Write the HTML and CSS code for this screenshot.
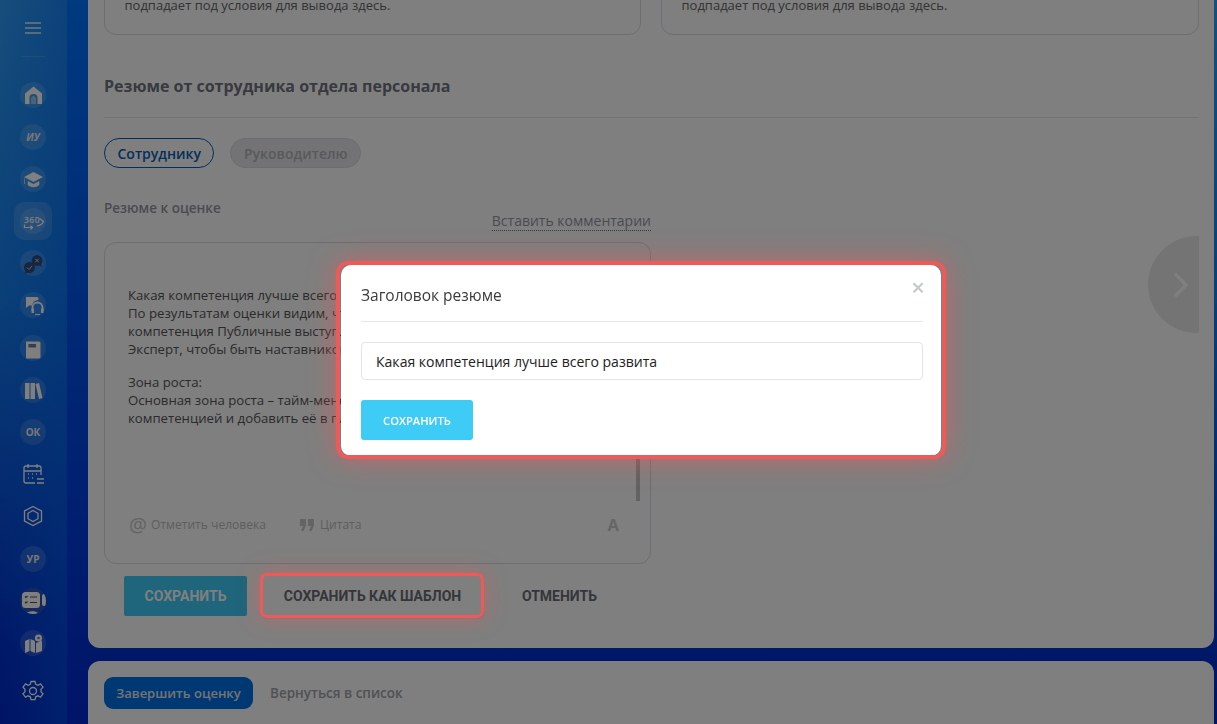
FILE: index.html
```html
<!DOCTYPE html>
<html lang="en">

<head>
    <meta charset="UTF-8">
    <meta name="viewport" content="width=device-width, initial-scale=1.0">
    <title>Резюме</title>
    <link rel="stylesheet" href="styles.css">
</head>

<body>
    <nav class="sidebar">
        <div class="burger"><span></span><span></span><span></span></div>
        <div class="side-line"></div>
        <div class="nav-list">
            <div class="nav-item"><svg viewBox="0 0 26 26"><path d="M13.500 4.500 5 11.500V22h4.500v-6a4 4 0 0 1 8 0v6H22V11.500z" fill="#fff"/><path d="M11 22v-5.500a2.500 2.500 0 0 1 5 0V22z" fill="#fff" opacity=".45"/></svg></div>
            <div class="nav-item"><span class="nav-text nav-italic">ИУ</span></div>
            <div class="nav-item"><svg viewBox="0 0 26 26"><path d="M13.500 6 4 11l9.500 5 9.500-5z" fill="#fff"/><path d="M8 15.500v3.500c3 2.500 8 2.500 11 0v-3.500L13.500 18.300zM4.500 12.500v5.500" fill="#fff" stroke="#fff" stroke-width=".6"/></svg></div>
            <div class="nav-item active"><svg viewBox="0 0 26 26"><text x="4" y="14.500" class="nav-svg-text">360</text><path d="M4.500 16.500v3h8M10.500 17.500l2 2-2 2M17 18c3-.5 5.500-2 6.500-4.500L19.500 10.500" fill="none" stroke="#fff" stroke-width="1.200"/></svg></div>
            <div class="nav-item"><svg viewBox="0 0 26 26"><circle cx="17" cy="10.500" r="5.400" fill="#2f4a7c"/><path d="M19 15l2.500 2-.5-3.500z" fill="#2f4a7c"/><circle cx="9.500" cy="17.500" r="5.500" fill="#2f4a7c"/><path d="M6 21l-2 2.500 3.500-.5z" fill="#2f4a7c"/><path d="M15.300 8.800l3.400 3.400M18.700 8.800l-3.400 3.400M7 17.500l2 2 3-3.500" fill="none" stroke="#c8d0dc" stroke-width="1"/></svg></div>
            <div class="nav-item"><svg viewBox="0 0 26 26"><path d="M6 5h11a1.500 1.500 0 0 1 1.500 1.500V8a7 7 0 0 0-6.500 5.500H9L6 16z" fill="#fff"/><path d="M12.500 19v-3.500a5 5 0 0 1 10 0V19" fill="none" stroke="#fff" stroke-width="1.800"/><path d="M11.500 16.500H14V21h-2.500zM21 16.500h2.500V21H21zM15 22h5v1h-5z" fill="#fff"/></svg></div>
            <div class="nav-item"><svg viewBox="0 0 26 26"><path d="M6 6.500h13a1.500 1.500 0 0 1 1.500 1.500v14a1.500 1.500 0 0 1-1.500 1.500H6z" fill="#fff"/><path d="M8.500 9h7.500v3.500H8.500z" fill="#687c9c"/></svg></div>
            <div class="nav-item"><svg viewBox="0 0 26 26"><path d="M5 6h4.500v16H5zM10.500 6H15v16h-4.500zM15.500 7l3.500-1 3.500 15-3.500 1z" fill="#fff"/></svg></div>
            <div class="nav-item"><span class="nav-text">ОК</span></div>
            <div class="nav-item plain"><svg viewBox="0 0 26 26" fill="none" stroke="#fff" stroke-width="1.300"><path d="M15 22H6a2 2 0 0 1-2-2V7a2 2 0 0 1 2-2h13a2 2 0 0 1 2 2v7M8 3v4M17 3v4M4 10h17"/><path d="M8 13h1M12 13h1M16 13h1M8 17h1M12 17h1M17 18h7M17 22h7" stroke-width="1.500"/></svg></div>
            <div class="nav-item plain"><svg viewBox="0 0 26 26" fill="none" stroke="#fff" stroke-width="1.300"><path d="M13 3.500 21.500 8v10L13 22.500 4.500 18V8z"/><path d="M13 7.500 18 10.300v5.400l-5 2.800-5-2.800v-5.400z"/></svg></div>
            <div class="nav-item"><span class="nav-text">УР</span></div>
            <div class="nav-item dark"><svg viewBox="0 0 26 26"><circle cx="13" cy="13" r="13" fill="#2850b8"/><rect x="2" y="4" width="18" height="16" rx="3.500" fill="#fff"/><path d="M5 8.500l1 1 1.500-1.500M10 9h7M5 14l1 1 1.500-1.500M10 14.500h7" fill="none" stroke="#555" stroke-width="1.200"/><rect x="22" y="6" width="6" height="12" rx="2" fill="#fff"/><path d="M5 26c2-3 10-4 13-1l-1 2H6z" fill="#fff"/></svg></div>
            <div class="nav-item"><svg viewBox="0 0 26 26"><path d="M5 11l4.500-2v12L5 23zM10.500 9l4.500 2v12l-4.500-2zM16 13l6-2.500V21l-6 2z" fill="#fff"/><circle cx="18.500" cy="8" r="3.600" fill="#fff"/><circle cx="18.500" cy="8" r="1.300" fill="#687c9c"/></svg></div>
            <div class="nav-item plain gear"><svg viewBox="0 0 26 26" fill="none" stroke="#fff" stroke-width="1.300"><circle cx="13" cy="13" r="3.500"/><path d="M11 3.500h4l.7 2.800 2.300 1 2.500-1.400 2.500 3.300-2 2.100v2.500l2 2.100-2.500 3.300-2.500-1.400-2.300 1-.7 2.800h-4l-.7-2.800-2.300-1-2.500 1.400L3 15.900l2-2.100v-2.500L3 9.200l2.500-3.300L8 7.300l2.300-1z"/></svg></div>
        </div>
    </nav>

    <main class="main">
        <section class="panel">
            <div class="cards">
                <div class="card">подпадает под условия для вывода здесь.</div>
                <div class="card">подпадает под условия для вывода здесь.</div>
            </div>
            <h2 class="section-title">Резюме от сотрудника отдела персонала</h2>
            <div class="pills">
                <button class="pill pill-active">Сотруднику</button>
                <button class="pill">Руководителю</button>
            </div>
            <div class="field">
                <div class="field-label">Резюме к оценке</div>
                <a class="insert-link">Вставить комментарии</a>
                <div class="editor">
                    <div class="editor-text">
                        <p>Какая компетенция лучше всего развита:<br>По результатам оценки видим, что лучше всего развита<br>компетенция Публичные выступления. Можно дать уровень<br>Эксперт, чтобы быть наставником для коллег.</p>
                        <p>Зона роста:<br>Основная зона роста – тайм-менеджмент. Стоит поработать над этой<br>компетенцией и добавить её в план развития.</p>
                    </div>
                    <div class="editor-scroll"></div>
                    <div class="editor-tools">
                        <span class="tool"><span class="tool-at">@</span>Отметить человека</span>
                        <span class="tool tool-quote"><svg class="quote-icon" viewBox="0 0 15 12"><path d="M0 0h6v6.500L3.500 12H1l2-5H0zM8 0h6v6.500L11.500 12H9l2-5H8z"/></svg>Цитата</span>
                        <span class="tool-font">A</span>
                    </div>
                </div>
            </div>
            <div class="form-buttons">
                <button class="btn btn-save">СОХРАНИТЬ</button>
                <button class="btn btn-template">СОХРАНИТЬ КАК ШАБЛОН<span class="highlight"></span></button>
                <button class="btn btn-cancel">ОТМЕНИТЬ</button>
            </div>
        </section>
        <div class="next-arrow"><svg viewBox="0 0 16 28" fill="none"><path d="M2 2l12 12L2 26" stroke="#fff" stroke-width="3.500"/></svg></div>
        <footer class="bottom-bar">
            <button class="finish-btn">Завершить оценку</button>
            <a class="back-link">Вернуться в список</a>
        </footer>
    </main>

    <div class="overlay"></div>

    <div class="modal">
        <span class="modal-ring"></span>
        <div class="modal-head">Заголовок резюме<span class="modal-close">×</span></div>
        <input class="modal-input" type="text" value="Какая компетенция лучше всего развита">
        <button class="modal-save">СОХРАНИТЬ</button>
    </div>
</body>

</html>
```

FILE: styles.css
```css
* {
    box-sizing: border-box;
}

body {
    margin: 0;
    height: 724px;
    overflow: hidden;
    display: flex;
    font-family: "Open Sans", sans-serif;
    background: linear-gradient(180deg, #2c9cf8 0%, #1480f0 40%, #0030d0 90%, #0028c8 100%);
}

button {
    font-family: inherit;
    border: 0;
    cursor: pointer;
}

/* sidebar */
.sidebar {
    width: 88px;
    flex-shrink: 0;
    padding: 22px 22px 0 0;
    display: flex;
    flex-direction: column;
    align-items: center;
    background:
        linear-gradient(180deg, #0074ff, #0028d4) right / 21px 100% no-repeat,
        linear-gradient(90deg, rgba(0, 100, 240, 0), rgba(0, 100, 240, .55));
}

.burger {
    width: 16px;
    display: flex;
    flex-direction: column;
    gap: 3.500px;
    opacity: .65;
}

.burger span {
    height: 1.500px;
    background: #fff;
}

.side-line {
    width: 24px;
    height: 1px;
    margin: 22px 0 25px;
    background: rgba(255, 255, 255, .15);
}

.nav-list {
    display: flex;
    flex-direction: column;
    align-items: center;
    gap: 16.200px;
}

.nav-item {
    width: 26px;
    height: 26px;
    border-radius: 50%;
    background: rgba(255, 255, 255, .14);
    display: flex;
    align-items: center;
    justify-content: center;
}

.nav-item svg {
    width: 26px;
    height: 26px;
    flex-shrink: 0;
}

.nav-item.plain {
    background: none;
}

.nav-item.dark {
    overflow: hidden;
}

.nav-item.gear {
    margin-top: 6px;
}

.nav-item.active {
    position: relative;
}

.nav-item.active::before {
    content: "";
    position: absolute;
    inset: -6px;
    border-radius: 10px;
    background: rgba(255, 255, 255, .14);
}

.nav-text {
    font-size: 10px;
    font-weight: 700;
    color: #f0f0f0;
}

.nav-italic {
    font-style: italic;
}

.nav-svg-text {
    font-family: "Open Sans", sans-serif;
    font-size: 8.500px;
    font-weight: 600;
    letter-spacing: .5px;
    fill: #fff;
}

/* main column */
.main {
    flex: 1;
    min-width: 0;
    padding-right: 3px;
    position: relative;
    display: flex;
    flex-direction: column;
}

.panel {
    height: 708px;
    margin-top: -60px;
    padding: 0 15px 0 16px;
    background: #fff;
    border-radius: 12px;
    flex-shrink: 0;
}

.cards {
    display: grid;
    grid-template-columns: 537px 538px;
    gap: 20px;
}

.card {
    height: 95px;
    padding: 55px 20px 0 19.500px;
    border: 1px solid #d8dce2;
    border-radius: 12px;
    font-size: 13px;
    line-height: 18px;
    color: #666;
}

.section-title {
    margin: 40px 0 0;
    padding-bottom: 20px;
    border-bottom: 1px solid #e4e6ea;
    font-size: 16px;
    line-height: 22px;
    font-weight: 700;
    color: #70747f;
}

.pills {
    margin-top: 20px;
    display: flex;
    gap: 16px;
}

.pill {
    height: 30px;
    padding: 0 12.500px;
    border-radius: 15px;
    border: 1px solid #d8dadf;
    background: #e6e7ea;
    font-size: 14px;
    font-weight: 600;
    color: #b0b2b8;
}

.pill-active {
    border-color: #0a5cb8;
    background: #fff;
    color: #0a5cb8;
}

.field {
    width: 547px;
    margin-top: 30px;
    display: flex;
    flex-direction: column;
}

.field-label {
    font-size: 13.500px;
    line-height: 20px;
    font-weight: 600;
    color: #94979f;
}

.insert-link {
    align-self: flex-end;
    margin-top: -6px;
    font-size: 14px;
    line-height: 18px;
    color: #94979f;
    border-bottom: 1px dotted #70747f;
}

.editor {
    position: relative;
    height: 322px;
    margin-top: 11px;
    padding: 43px 23px 28px;
    border: 1px solid #d8dce2;
    border-radius: 12px;
    display: flex;
    flex-direction: column;
}

.editor-text {
    font-size: 13.200px;
    line-height: 18px;
    color: #555;
}

.editor-text p {
    margin: 0 0 15px;
}

.editor-scroll {
    position: absolute;
    top: 170px;
    right: 10px;
    width: 4px;
    height: 88px;
    background: #c4c4c4;
}

.editor-tools {
    margin-top: auto;
    margin-left: 1px;
    display: flex;
    align-items: center;
    font-size: 12.100px;
    line-height: 20px;
    color: #bcbcbc;
}

.tool {
    display: flex;
    align-items: center;
}

.tool-at {
    font-size: 20px;
    margin-right: 4px;
    color: #c8c8c8;
}

.tool-quote {
    margin-left: 34px;
}

.quote-icon {
    width: 15px;
    height: 12px;
    margin-right: 5px;
    fill: #c8c8c8;
}

.tool-font {
    margin-left: auto;
    margin-right: 8px;
    font-size: 16.500px;
    font-weight: 700;
    color: #ccc;
}

.form-buttons {
    margin-top: 12px;
    padding-left: 20px;
    display: flex;
    gap: 16px;
}

.btn {
    height: 40px;
    border-radius: 2px;
    font-family: Roboto, sans-serif;
    font-size: 14px;
    font-weight: 700;
    background: #fff;
    color: #6a6c74;
}

.btn-save {
    width: 123px;
    background: #3ecbf6;
    color: #fff;
}

.btn-template {
    position: relative;
    width: 219px;
    box-shadow: 0 1px 3px rgba(0, 0, 0, .3);
}

.btn-cancel {
    width: 115px;
    margin-left: 4px;
}

/* red marks sit above the overlay */
.highlight {
    position: absolute;
    inset: -3px -2px -2px -3px;
    z-index: 20;
    border: 3px solid #ee5a5a;
    border-radius: 7px;
    box-shadow: 0 0 20px rgba(238, 90, 90, .5);
}

.next-arrow {
    position: absolute;
    top: 236px;
    right: 18px;
    width: 51px;
    height: 97px;
    border-radius: 49px 0 0 49px;
    background: #e8e8e8;
    display: flex;
    align-items: center;
    justify-content: flex-end;
    padding-right: 11px;
}

.next-arrow svg {
    width: 15px;
    height: 28px;
}

.bottom-bar {
    flex: 1;
    margin-top: 13px;
    padding: 16px;
    background: #fff;
    border-radius: 12px 12px 0 0;
    display: flex;
    align-items: flex-start;
    gap: 17px;
}

.finish-btn {
    width: 149px;
    height: 32px;
    border-radius: 9px;
    background: #0070e8;
    font-size: 13px;
    font-weight: 600;
    color: #e8e8e8;
}

.back-link {
    font-size: 13.500px;
    line-height: 32px;
    font-weight: 600;
    color: #a0a2a8;
}

.overlay {
    position: fixed;
    inset: 0;
    z-index: 10;
    background: rgba(0, 0, 0, .5);
}

/* modal */
.modal {
    position: fixed;
    top: 265px;
    left: 341px;
    z-index: 15;
    width: 600px;
    height: 191px;
    padding: 20px 20px 0;
    background: #fff;
    border-radius: 10px;
    display: flex;
    flex-direction: column;
}

.modal-ring {
    position: absolute;
    inset: -4px -5px -3px -5px;
    border: 4px solid #ee5a5a;
    border-radius: 12px;
    box-shadow: 0 0 26px rgba(238, 90, 90, .6);
}

.modal-head {
    position: relative;
    flex-shrink: 0;
    margin-right: -2px;
    height: 37px;
    border-bottom: 1px solid #e6e6e6;
    font-size: 15.500px;
    line-height: 20px;
    font-weight: 500;
    color: #3c3c3c;
}

.modal-close {
    position: absolute;
    right: -2px;
    top: -12px;
    font-size: 24px;
    line-height: 28px;
    font-weight: 600;
    color: #c4c8cf;
}

.modal-input {
    flex-shrink: 0;
    height: 38px;
    margin: 20px -2px 0 0;
    padding: 0 14px;
    border: 1px solid #e4e4e4;
    border-radius: 4px;
    font-family: inherit;
    font-size: 14.050px;
    color: #222;
}

.modal-save {
    flex-shrink: 0;
    width: 112px;
    height: 40px;
    margin-top: 20px;
    border-radius: 3px;
    background: #3ecbf6;
    font-size: 11.200px;
    font-weight: 600;
    color: #fff;
}
```
